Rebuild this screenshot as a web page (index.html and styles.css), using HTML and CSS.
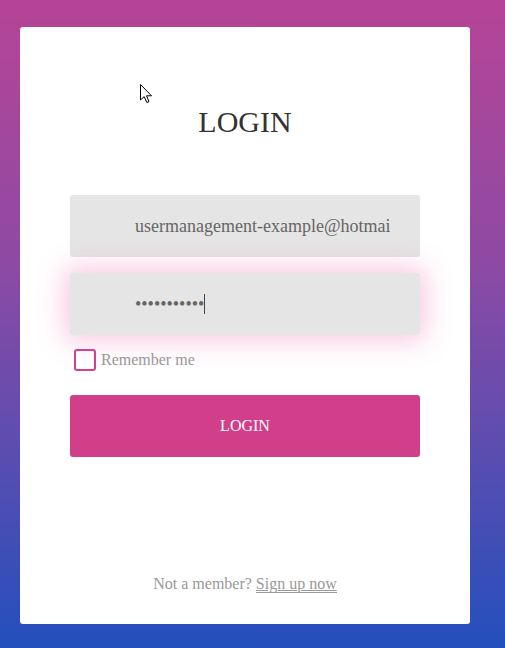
FILE: index.html
```html
<!DOCTYPE html>
<html>
<head>
<meta charset="utf-8">
<link rel="stylesheet" href="styles.css">
</head>
<body>
<div class="card">
  <h1 class="title">LOGIN</h1>
  <form class="form">
    <input class="field" type="text" value="usermanagement-example@hotmail.com">
    <div class="focus-wrap">
      <input class="field field-focus" type="password" value="passwordxyz">
      <span class="caret"></span>
    </div>
    <label class="remember"><span class="box"></span><span>Remember me</span></label>
    <button class="btn" type="button">LOGIN</button>
  </form>
  <p class="footer">Not a member? <a class="link" href="#">Sign up now</a></p>
</div>
<svg class="cursor" width="13" height="20" viewBox="0 0 13 20"><path d="M0.5 0.5 L0.5 16 L4.2 12.6 L6.8 18.6 L9 17.6 L6.5 11.8 L11.5 11.8 Z" fill="#fff" stroke="#000" stroke-width="1" stroke-linejoin="miter"/></svg>
</body>
</html>
```
FILE: styles.css
```css
html, body {
  margin: 0;
  padding: 0;
}
body {
  width: 505px;
  height: 648px;
  background: linear-gradient(180deg, #b64496 0%, #8e4aa4 40%, #5a4db0 70%, #234fbd 100%);
  font-family: "Liberation Serif", "Times New Roman", serif;
  position: relative;
  overflow: hidden;
}
.card {
  position: relative;
  margin: 27px 0 0 20px;
  width: 450px;
  height: 597px;
  box-sizing: border-box;
  background: #fff;
  border-radius: 3px;
  padding: 80px 50px 30px;
  display: flex;
  flex-direction: column;
}
.title {
  margin: 0;
  font-weight: normal;
  font-size: 30px;
  line-height: 30px;
  color: #333;
  text-align: center;
}
.form {
  margin-top: 58px;
  display: flex;
  flex-direction: column;
}
.field {
  display: block;
  width: 350px;
  height: 62px;
  box-sizing: border-box;
  border: none;
  border-radius: 3px;
  background: #e5e5e5;
  padding: 0 30px 0 65px;
  font-family: "Liberation Serif", "Times New Roman", serif;
  font-size: 18px;
  color: #666;
  outline: none;
  margin: 0;
}
.focus-wrap {
  position: relative;
  margin-top: 16px;
}
.field-focus {
  box-shadow: 0 0 26px 6px rgba(238, 100, 170, 0.34);
}
.caret {
  position: absolute;
  left: 134px;
  top: 21px;
  width: 1px;
  height: 20px;
  background: #444;
}
.remember {
  margin-top: 14px;
  margin-left: 4px;
  display: flex;
  align-items: center;
  gap: 5px;
  height: 22px;
  font-size: 16px;
  color: #999;
}
.box {
  width: 22px;
  height: 22px;
  box-sizing: border-box;
  border: 2px solid #d2418c;
  border-radius: 3px;
  background: #fff;
}
.btn {
  margin-top: 24px;
  width: 350px;
  height: 62px;
  border: none;
  border-radius: 3px;
  background: #d13f8b;
  color: #fff;
  font-family: "Liberation Serif", "Times New Roman", serif;
  font-size: 16px;
  padding: 0;
}
.footer {
  margin: auto 0 0;
  text-align: center;
  font-size: 16px;
  line-height: 20px;
  color: #999;
}
.link {
  color: #999;
  text-decoration: underline;
  border-bottom: 1px solid #999;
}
.cursor {
  position: absolute;
  left: 140px;
  top: 84px;
}
```
